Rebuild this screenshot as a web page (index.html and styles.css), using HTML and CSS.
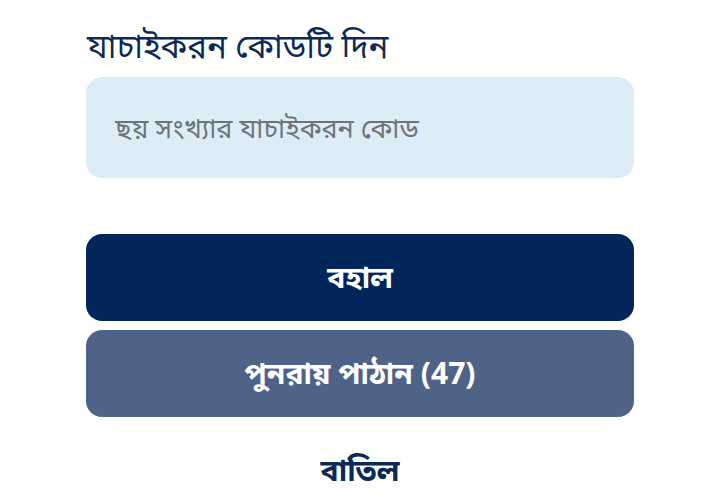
FILE: index.html
```html
<!DOCTYPE html>
<html lang="bn">
<head>
  <meta charset="UTF-8">
  <meta name="viewport" content="width=device-width, initial-scale=1">
  <title>যাচাইকরন কোড</title>
  <link rel="stylesheet" href="styles.css">
</head>
<body>
  <div class="verify">
    <label class="label" for="code">যাচাইকরন কোডটি দিন</label>
    <input class="code-input" id="code" type="text" placeholder="ছয় সংখ্যার যাচাইকরন কোড">
    <div class="actions">
      <button class="btn btn-primary">বহাল</button>
      <button class="btn btn-secondary">পুনরায় পাঠান (47)</button>
      <button class="btn-link">বাতিল</button>
    </div>
  </div>
</body>
</html>
```

FILE: styles.css
```css
* {
  box-sizing: border-box;
}

body {
  margin: 0;
  background: #fff;
  font-family: "Noto Sans", "Noto Sans Bengali", sans-serif;
}

.verify {
  width: 548px;
  margin: 0 0 0 86px;
  padding-top: 23px;
  display: flex;
  flex-direction: column;
}

.label {
  font-size: 33px;
  color: #0b2a57;
  line-height: 46px;
  padding-left: 1px;
  margin-bottom: 8px;
}

.code-input {
  height: 101px;
  border: none;
  border-radius: 16px;
  background: #ddedf8;
  padding: 0 29px;
  font-family: inherit;
  font-size: 27px;
  color: #333;
  outline: none;
}

.code-input::placeholder {
  color: #6e7378;
}

.actions {
  margin-top: 56px;
  display: flex;
  flex-direction: column;
  gap: 9px;
}

.btn {
  height: 87px;
  border: none;
  border-radius: 16px;
  color: #fff;
  font-family: inherit;
  font-size: 30px;
  font-weight: bold;
  cursor: pointer;
}

.btn-primary {
  background: #03265a;
}

.btn-secondary {
  background: #4e6387;
}

.btn-link {
  margin-top: 22px;
  background: none;
  border: none;
  font-family: inherit;
  font-size: 30px;
  font-weight: bold;
  color: #0b2a57;
  cursor: pointer;
}
```
